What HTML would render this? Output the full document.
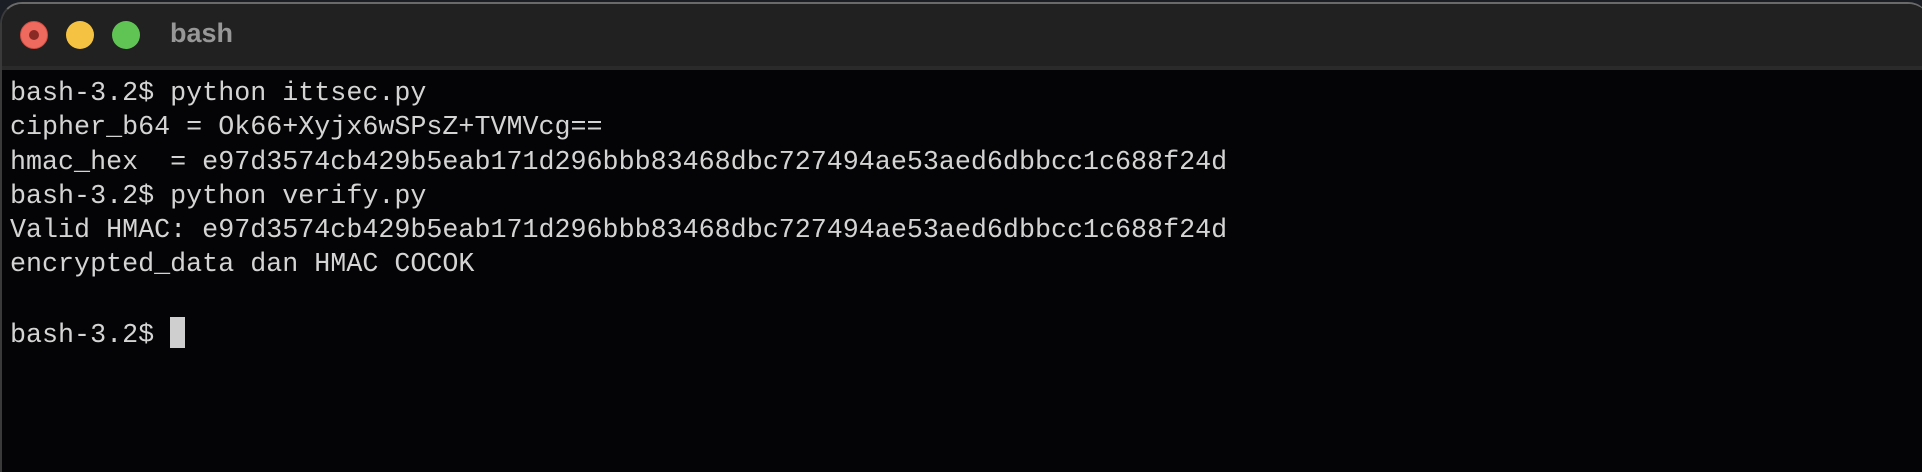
<!DOCTYPE html>
<html><head><style>
html,body{margin:0;padding:0;width:1922px;height:462px;overflow:hidden;background:#1b1e24;}
.win{position:absolute;left:0;top:2px;width:1930px;height:470px;border-radius:22px 22px 0 0;border-top:2px solid #6a6a6a;border-left:2px solid #3a3a3a;background:#040406;overflow:hidden;box-sizing:border-box;}
.bar{position:absolute;left:0;top:0;right:0;height:62px;background:#212121;border-bottom:4px solid #2a2a2a;}
.dot{position:absolute;top:17px;width:28px;height:28px;border-radius:50%;}
.title{position:absolute;left:168px;top:14px;font:bold 27px "Liberation Sans",sans-serif;color:#979797;}
pre{position:absolute;left:8px;top:73px;margin:0;font:26.7px/34.3px "Liberation Mono",monospace;color:#d4d4d4;}
.cur{display:inline-block;width:15px;height:31px;background:#cfcfcf;vertical-align:-6px;}
</style></head><body>
<div class="win">
 <div class="bar">
  <div class="dot" style="left:18px;background:#ee6a5e;border:1px solid #d04c42;box-sizing:border-box"><div style="position:absolute;left:8px;top:8px;width:10px;height:10px;border-radius:50%;background:#8a2a25"></div></div>
  <div class="dot" style="left:64px;background:#f5c242;"></div>
  <div class="dot" style="left:110px;background:#5fc454;"></div>
  <div class="title">bash</div>
 </div>
<pre>bash-3.2$ python ittsec.py
cipher_b64 = Ok66+Xyjx6wSPsZ+TVMVcg==
hmac_hex  = e97d3574cb429b5eab171d296bbb83468dbc727494ae53aed6dbbcc1c688f24d
bash-3.2$ python verify.py
Valid HMAC: e97d3574cb429b5eab171d296bbb83468dbc727494ae53aed6dbbcc1c688f24d
encrypted_data dan HMAC COCOK

bash-3.2$ <span class="cur"></span></pre>
</div>
</body></html>
